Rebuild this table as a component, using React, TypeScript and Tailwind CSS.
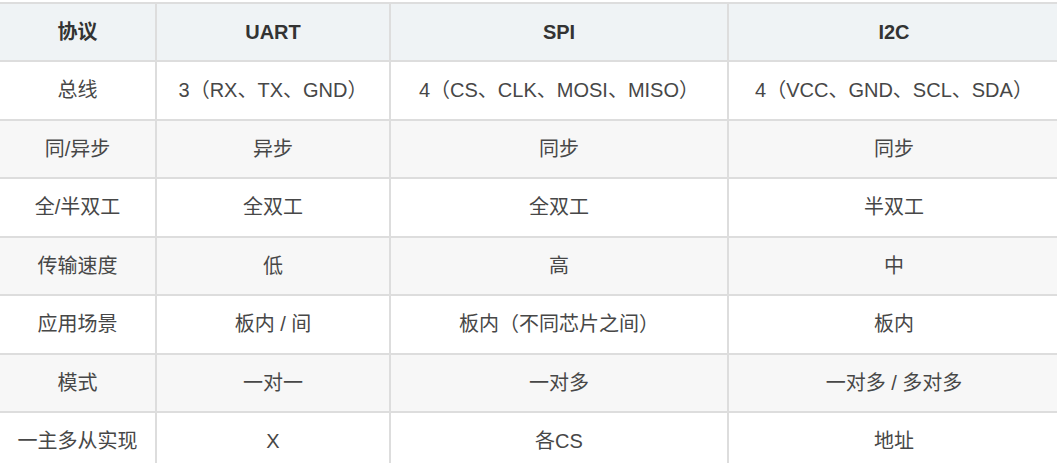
const header = ["协议", "UART", "SPI", "I2C"];

const rows: string[][] = [
  ["总线", "3（RX、TX、GND）", "4（CS、CLK、MOSI、MISO）", "4（VCC、GND、SCL、SDA）"],
  ["同/异步", "异步", "同步", "同步"],
  ["全/半双工", "全双工", "全双工", "半双工"],
  ["传输速度", "低", "高", "中"],
  ["应用场景", "板内 / 间", "板内（不同芯片之间）", "板内"],
  ["模式", "一对一", "一对多", "一对多 / 多对多"],
  ["一主多从实现", "X", "各CS", "地址"],
];

export default function App() {
  return (
    <div
      className="w-[1057px] h-[463px] overflow-hidden bg-white pt-[2px] text-[20px] text-[#474747]"
      style={{ fontFamily: '"Liberation Sans", "Noto Sans CJK SC", sans-serif' }}
    >
      <div className="grid w-[1059px] grid-cols-[155px_232px_336px_330px] gap-[2px] border-t-2 border-[#dddddd] bg-[#dddddd]">
        {/* header row */}
        {header.map((h) => (
          <div
            key={h}
            className="flex h-[56px] items-center justify-center bg-[#eff3f5] font-bold text-[#333333]"
          >
            {h}
          </div>
        ))}

        {/* body rows, zebra striped */}
        {rows.map((row, i) =>
          row.map((cell, j) => (
            <div
              key={`${i}-${j}`}
              className={`flex h-[56.5px] items-center justify-center whitespace-nowrap ${
                i % 2 === 1 ? "bg-[#f7f7f7]" : "bg-white"
              }`}
            >
              {cell}
            </div>
          ))
        )}
      </div>
    </div>
  );
}
